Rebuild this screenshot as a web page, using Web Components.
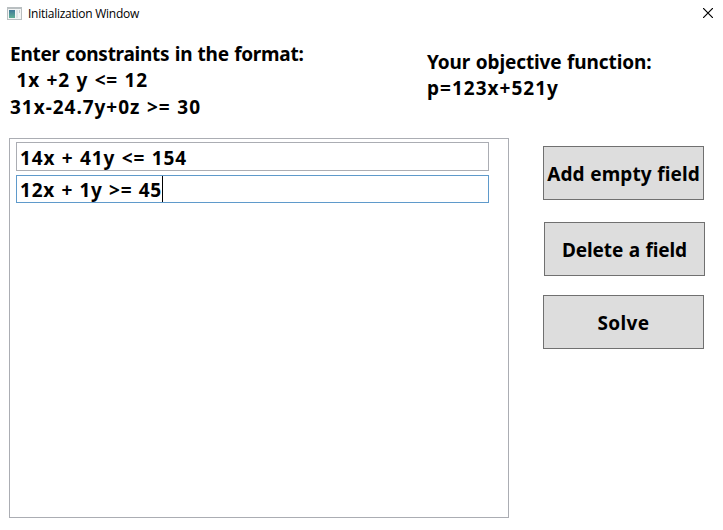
<!DOCTYPE html>
<html lang="en">
<head>
<meta charset="utf-8">
<title>Initialization Window</title>
<style>
html,body{margin:0;background:#fff;overflow:hidden}
body{width:723px;height:530px}
</style>
</head>
<body>
<init-window></init-window>
<script>
const define = (name, html, setup) => customElements.define(name, class extends HTMLElement {
  connectedCallback() {
    if (this.shadowRoot) return;
    const t = document.createElement('template');
    t.innerHTML = html;
    this.attachShadow({mode: 'open'}).appendChild(t.content.cloneNode(true));
    if (setup) setup(this, this.shadowRoot);
  }
});

// One line of text, tracked so that its advance equals the "w" attribute.
define('fit-line', `<style>
:host{display:block;white-space:pre;width:max-content;font-variant-ligatures:none}
span{display:inline-block}
</style><span></span>`, (host, root) => {
  const s = root.querySelector('span');
  s.textContent = host.getAttribute('text');
  const w = parseFloat(host.getAttribute('w'));
  const natural = s.getBoundingClientRect().width;
  s.style.letterSpacing = (w - natural) / s.textContent.length + 'px';
});

define('title-bar', `<style>
:host{display:flex;height:27px;align-items:center;padding:0 10px 0 7px;box-sizing:border-box;font:12px/16px "Open Sans","Noto Sans",sans-serif;font-weight:400;color:#000}
.icon{margin-right:6px;display:block}
.close{margin:0 0 1px auto;display:block}
</style>
<svg class="icon" width="15" height="13" viewBox="0 0 15 13" shape-rendering="crispEdges">
<rect width="15" height="13" fill="#b9bfc1"/><rect x="1" y="2" width="13" height="10" fill="#f3f5f5"/>
<defs><linearGradient id="g" x2="0" y2="1"><stop offset="0" stop-color="#3f7898"/><stop offset="1" stop-color="#61b095"/></linearGradient></defs>
<rect x="2" y="3" width="6" height="8" fill="url(#g)"/><rect x="9" y="3" width="2" height="8" fill="#dfe4e6"/><rect x="12" y="3" width="1" height="3" fill="#c8ced0"/>
</svg>
<fit-line w="111" text="Initialization Window"></fit-line>
<svg class="close" width="10" height="10" viewBox="0 0 10 10"><path d="M0 0L10 10M10 0L0 10" stroke="#000" stroke-width="1.2"/></svg>`);

define('constraint-field', `<style>
:host{display:flex;align-items:flex-start;box-sizing:border-box;width:473px;height:29px;border:1px solid #abadb3;padding-left:3px;background:#fff}
:host([active]){height:28px;border-color:#5f9acb}
slot{display:block;padding-top:2px}
:host([active]) slot{padding-top:1px}
i{display:none;width:1px;height:26px;background:#000}
:host([active]) i{display:block}
</style><slot></slot><i></i>`);

define('constraint-list', `<style>
:host{display:flex;flex-direction:column;gap:4px;box-sizing:border-box;width:500px;height:380px;border:1px solid #abadb3;padding:3px 6px}
</style><slot></slot>`);

define('push-button', `<style>
:host{display:flex;justify-content:center;box-sizing:border-box;width:161px;height:54px;border:1px solid #707070;background:#ddd;padding-top:14px}
</style><slot></slot>`);

define('init-window', `<style>
:host{display:block;width:723px;height:530px;background:#fff;color:#000;font:bold 19px/26.4px "Noto Sans",sans-serif;word-spacing:.7px}
title-bar{word-spacing:0}
.head{display:grid;grid-template-columns:417px 1fr;height:111px;box-sizing:border-box;padding:14px 0 0 10px}
.objective{padding-top:8px}
.main{display:flex;padding-left:9px;gap:34px}
.buttons{padding-top:8px;display:flex;flex-direction:column}
.del{margin:22px 0 19px 1px}
</style>
<title-bar></title-bar>
<div class="head">
 <div><fit-line w="293.5" text="Enter constraints in the format:"></fit-line><fit-line w="138" text=" 1x +2 y &lt;= 12"></fit-line><fit-line w="191" text="31x-24.7y+0z &gt;= 30"></fit-line></div>
 <div class="objective"><fit-line w="224.5" text="Your objective function:"></fit-line><fit-line w="132" text="p=123x+521y"></fit-line></div>
</div>
<div class="main">
 <constraint-list>
  <constraint-field><fit-line w="167" text="14x + 41y &lt;= 154"></fit-line></constraint-field>
  <constraint-field active><fit-line w="142" text="12x + 1y &gt;= 45"></fit-line></constraint-field>
 </constraint-list>
 <div class="buttons">
  <push-button><fit-line w="152.5" text="Add empty field"></fit-line></push-button>
  <push-button class="del"><fit-line w="125" text="Delete a field"></fit-line></push-button>
  <push-button><fit-line w="52" text="Solve"></fit-line></push-button>
 </div>
</div>`);
</script>
</body>
</html>
